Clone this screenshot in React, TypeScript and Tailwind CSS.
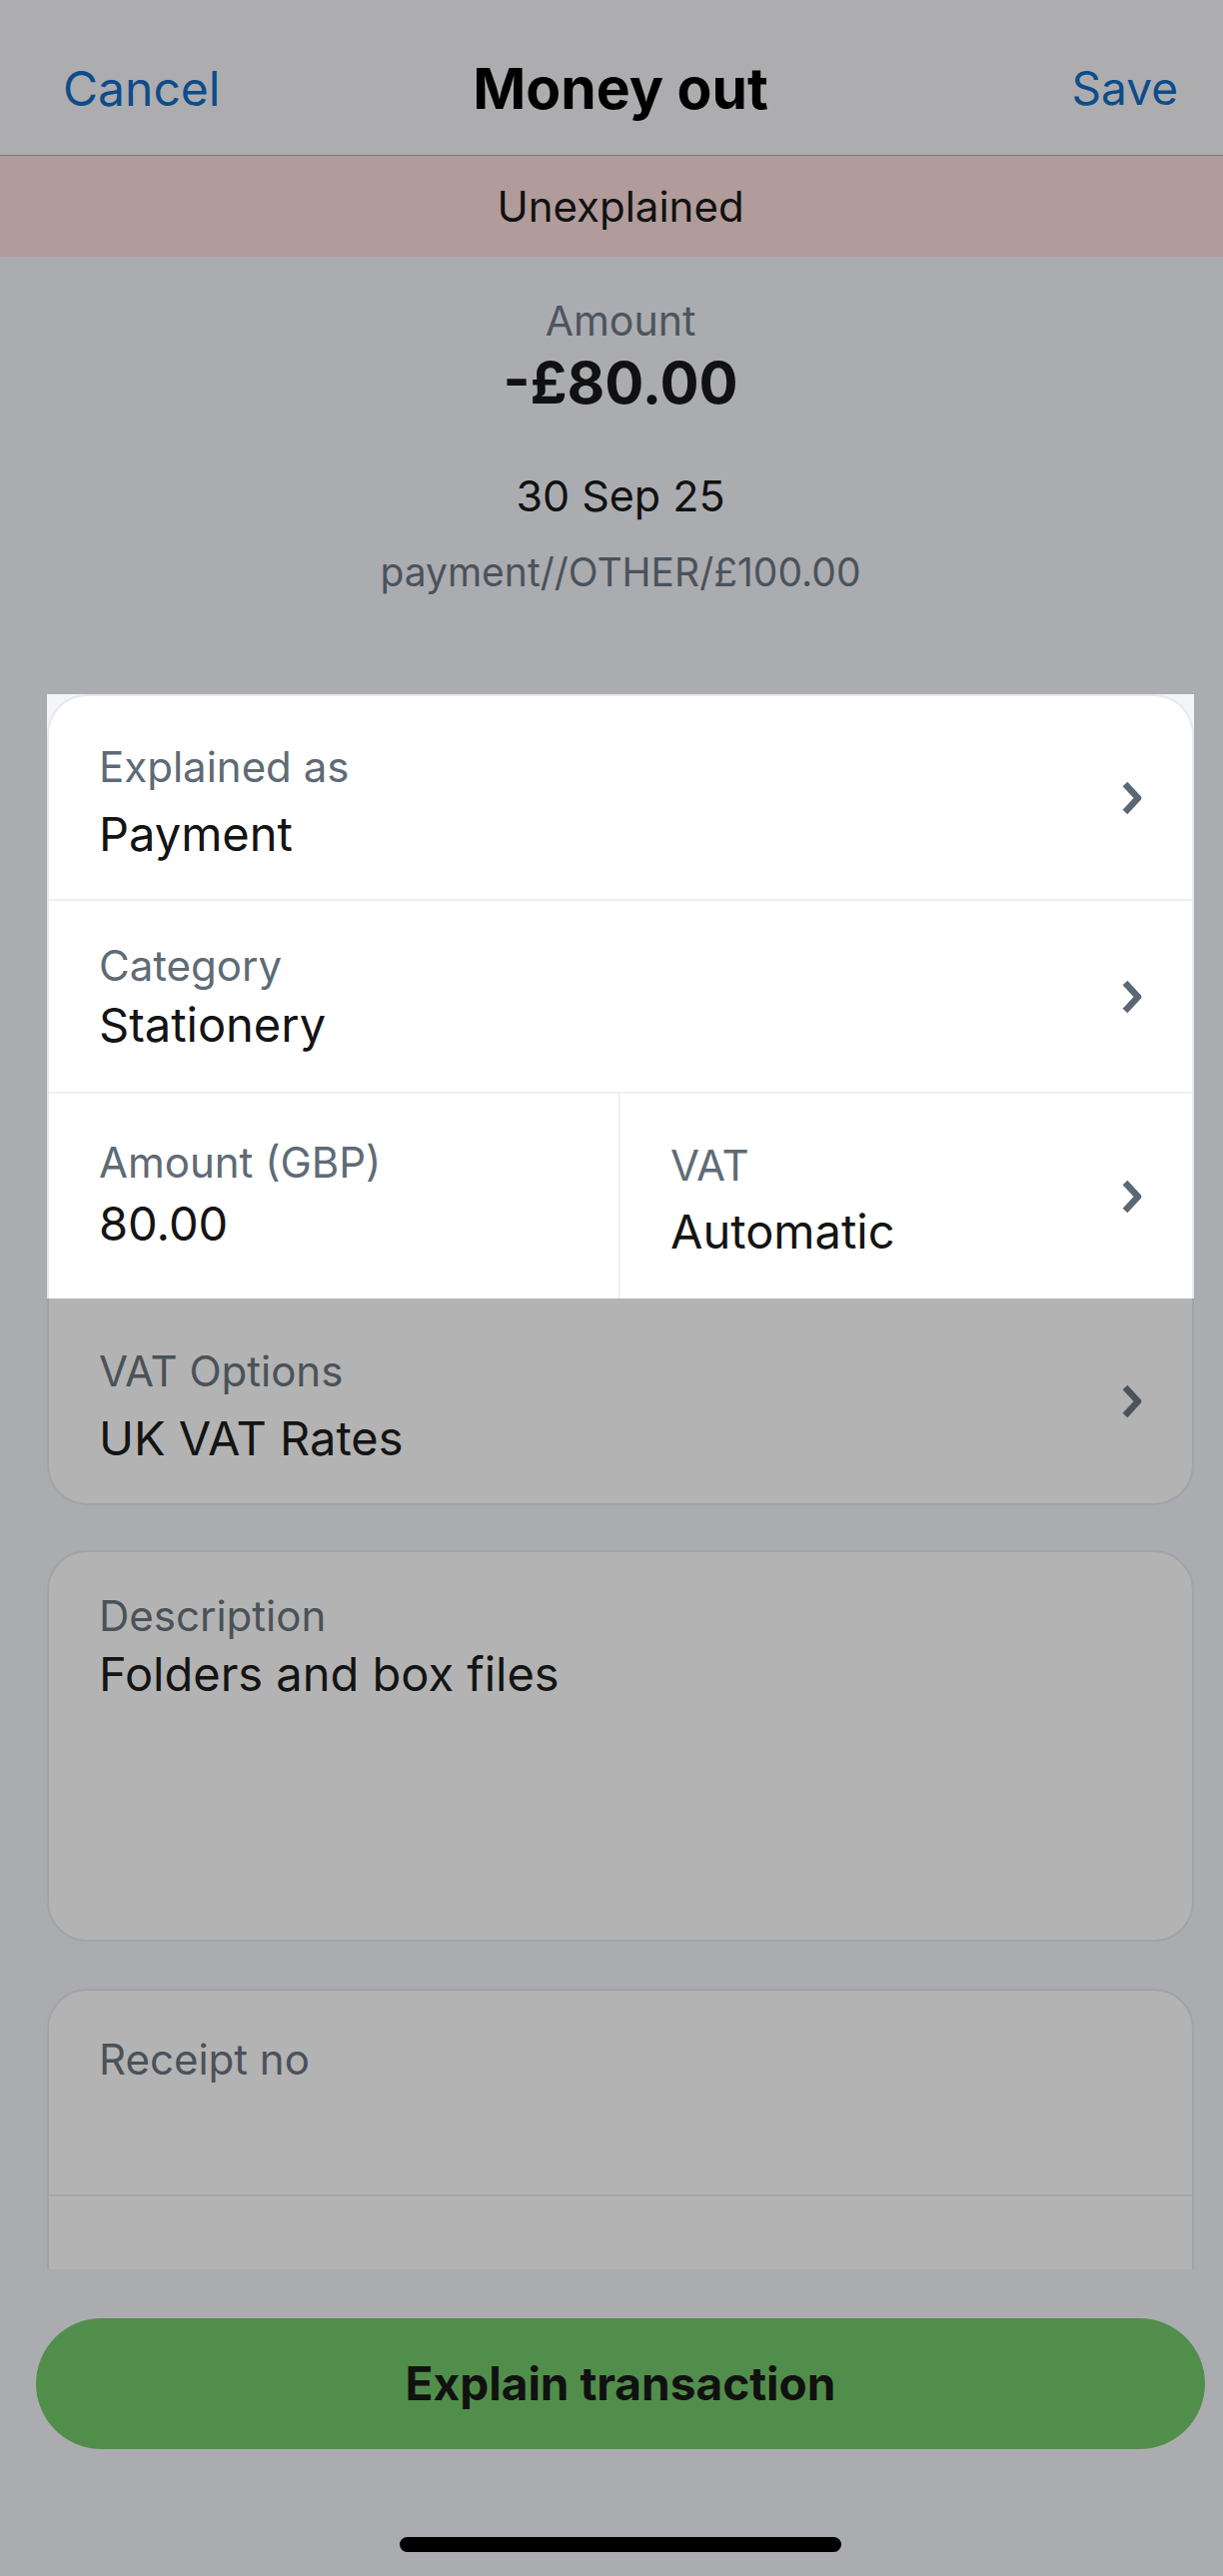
function Chevron({ dim = false }: { dim?: boolean }) {
  return (
    <svg width="24" height="36" viewBox="0 0 24 36" className="shrink-0 self-center">
      <path
        d="M4 4 L17 18 L4 32"
        fill="none"
        stroke={dim ? '#4a535b' : '#5b6873'}
        strokeWidth="6.5"
        strokeLinejoin="round"
      />
    </svg>
  )
}

function Field({ label, value, gap, dim = false }: { label: string; value: string; gap: string; dim?: boolean }) {
  return (
    <div className="flex flex-col">
      <span className={`text-[42px] leading-[52px] ${dim ? 'text-[#4a5259]' : 'text-[#5e6b76]'}`}>{label}</span>
      <span className={`${gap} text-[47px] leading-[58px] text-[#141414]`}>{value}</span>
    </div>
  )
}

export default function App() {
  return (
    <div className="w-[1224px] h-[2579px] overflow-hidden bg-[#abacb0] font-['Inter',sans-serif]">
      <div className="w-[1242px] h-full flex flex-col">
        {/* scrollable content */}
        <div className="h-[2272px] overflow-hidden flex flex-col">
          <header className="h-[156px] shrink-0 grid grid-cols-[1fr_auto_1fr] items-center px-[63px] pt-[22px] bg-[#adadaf] border-b border-[#7b7475]">
            <span className="justify-self-start text-[48px] text-[#0d4c8a]">Cancel</span>
            <span className="text-[57px] font-bold text-black">Money out</span>
            <span className="justify-self-end text-[46px] text-[#0d4c8a]">Save</span>
          </header>
          <div className="h-[101px] shrink-0 flex items-center justify-center bg-[#b19b9b]">
            <span className="text-[42px] text-[#111]">Unexplained</span>
          </div>

          <div className="flex flex-col items-center">
            <span className="mt-[39px] text-[41px] leading-[50px] text-[#4c555d]">Amount</span>
            <span className="mt-[2px] text-[58px] leading-[70px] font-bold text-[#111]">-£80.00</span>
            <span className="mt-[52px] text-[43px] leading-[52px] text-[#111]">30 Sep 25</span>
            <span className="mt-[27px] text-[39px] leading-[48px] text-[#4a535b]">payment//OTHER/£100.00</span>
          </div>

          {/* main card, top part highlighted */}
          <div className="mt-[98px] mx-[47px] flex flex-col">
            <div className="bg-[#f4f5f9]">
              <div className="bg-white rounded-t-[40px] border-2 border-b-0 border-[#e6e9ef]">
                <div className="flex justify-between pl-[50px] pr-[47px] border-b-2 border-[#eef0f5]">
                  <div className="pt-[45px] pb-[36px]">
                    <Field label="Explained as" value="Payment" gap="mt-[12px]" />
                  </div>
                  <Chevron />
                </div>
                <div className="flex justify-between pl-[50px] pr-[47px] border-b-2 border-[#eef0f5]">
                  <div className="pt-[39px] pb-[38px]">
                    <Field label="Category" value="Stationery" gap="mt-[4px]" />
                  </div>
                  <Chevron />
                </div>
                <div className="grid grid-cols-2">
                  <div className="pl-[50px] pt-[43px] pb-[46px] border-r-2 border-[#eef0f5]">
                    <Field label="Amount (GBP)" value="80.00" gap="mt-[6px]" />
                  </div>
                  <div className="flex justify-between pl-[50px] pr-[47px]">
                    <div className="pt-[46px] pb-[38px]">
                      <Field label="VAT" value="Automatic" gap="mt-[11px]" />
                    </div>
                    <Chevron />
                  </div>
                </div>
              </div>
            </div>
            <div className="flex justify-between bg-[#b3b3b3] rounded-b-[40px] border-2 border-t-0 border-[#a2a3a7] pl-[50px] pr-[47px]">
              <div className="pt-[47px] pb-[36px]">
                <Field label="VAT Options" value="UK VAT Rates" gap="mt-[12px]" dim />
              </div>
              <Chevron dim />
            </div>
          </div>

          <div className="mt-[45px] mx-[47px] h-[392px] shrink-0 bg-[#b3b3b3] rounded-[40px] border-2 border-[#a2a3a7] pl-[50px] pt-[38px]">
            <Field label="Description" value="Folders and box files" gap="mt-[3px]" dim />
          </div>

          <div className="mt-[47px] mx-[47px] h-[400px] shrink-0 bg-[#b3b3b3] rounded-[40px] border-2 border-[#a2a3a7] pt-[43px]">
            <span className="block pl-[50px] text-[42px] leading-[52px] text-[#4a5259]">Receipt no</span>
            <div className="mt-[109px] border-t-2 border-[#a6a7ab]" />
          </div>
        </div>

        {/* footer */}
        <div className="flex-1 flex flex-col">
          <button className="mt-[49px] mx-[36px] h-[131px] rounded-full bg-[#528e4b] text-[46px] font-bold text-[#111]">
            Explain transaction
          </button>
          <div className="mt-[88px] ml-[400px] w-[442px] h-[15px] rounded-full bg-black" />
        </div>
      </div>
    </div>
  )
}
